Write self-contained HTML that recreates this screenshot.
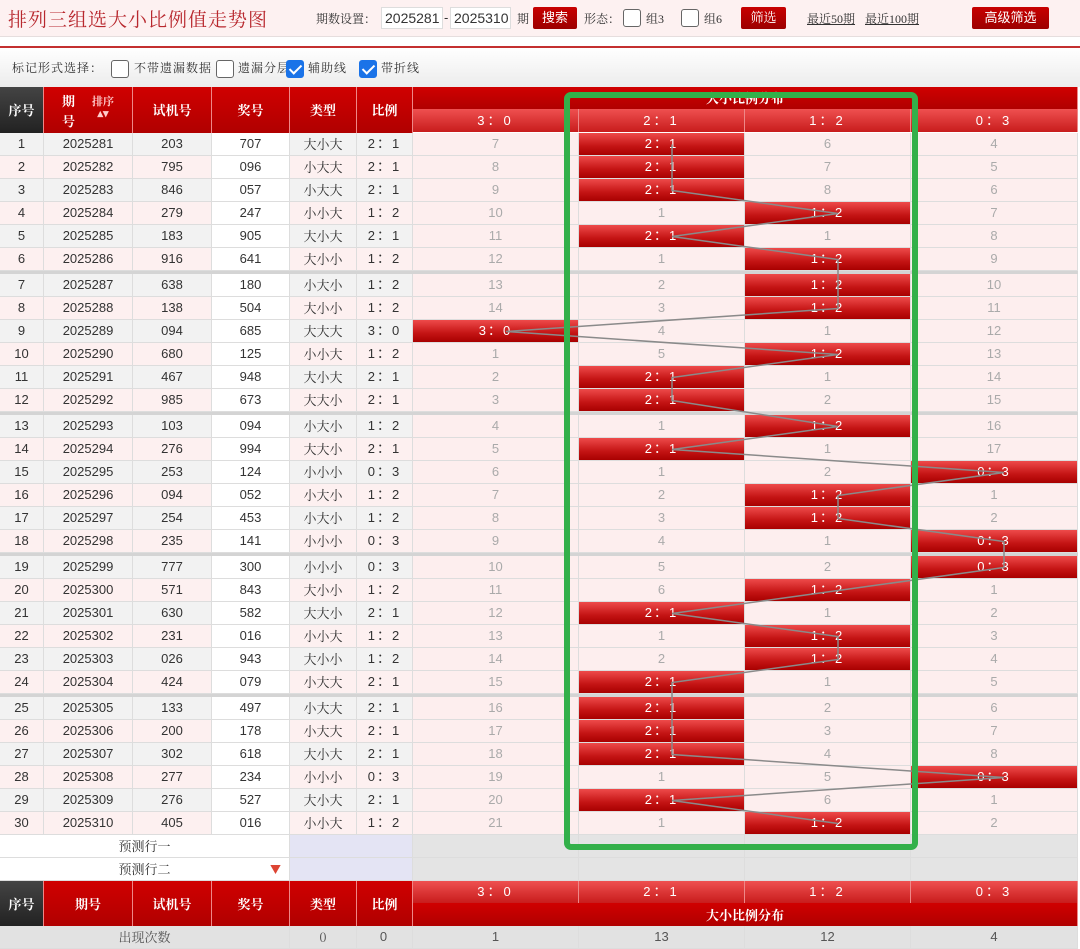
<!DOCTYPE html>
<html><head><meta charset="utf-8">
<style>
*{box-sizing:border-box;margin:0;padding:0}
body{width:1080px;height:939px;overflow:hidden;background:#fff;font-family:"Liberation Sans","Noto Sans CJK SC",sans-serif;font-size:13px;color:#333;position:relative}
.top{position:absolute;left:0;top:0;width:1080px;height:37px;background:#fdf1f1;border-bottom:1px solid #e6dede}
.a{position:absolute;white-space:nowrap}
.sf{font-family:"Liberation Serif","Noto Serif CJK SC",serif}
.title{left:8px;top:5px;font-size:19px;color:#b8282e;font-family:"Noto Serif CJK SC",serif;letter-spacing:1px}
.inp{position:absolute;top:7px;height:22px;background:#fff;border:1px solid #ddd;font-size:14px;line-height:20px;padding-left:3px}
.btn{position:absolute;top:7px;height:22px;background:linear-gradient(#c80000,#9c0000);color:#fff;font-size:13px;line-height:22px;text-align:center;border-radius:2px}
.cb{position:absolute;width:18px;height:18px;border:1px solid #666;border-radius:3px;background:#fff}
.cb.on{background:#1a73e8;border-color:#1a73e8}
.cb.on:after{content:"";position:absolute;left:5px;top:1px;width:5px;height:10px;border:solid #fff;border-width:0 2px 2px 0;transform:rotate(45deg)}
.lnk{text-decoration:underline;color:#333;font-size:12px}
.bar{position:absolute;left:0;top:46px;width:1080px;height:41px;border-top:2px solid #c43030;background:linear-gradient(#fff,#ececec)}
.row{position:absolute;left:0;height:23px;display:flex}
.row div{height:23px;line-height:22px;text-align:center;border-right:1px solid #ddd;border-bottom:1px solid #ddd;flex:none}
.w0{width:44px}.w1{width:89px}.w2{width:79px}.w3{width:78px}.w4{width:67px}.w5{width:56px;letter-spacing:2px}.w6{width:166px}.w9{width:167px}
.o div{background:#f2f2f2}.e div{background:#fdf0f0}
.row div.j{background:#fff}
.row div.w4{font-family:"Noto Serif CJK SC",serif}
.row div.m{background:#fdeeee;color:#aaa}
.row div.h{background:linear-gradient(#ee4a4a,#c41414 60%,#a80000);color:#fff;letter-spacing:2px}
.sep{position:absolute;left:0;width:1078px;height:3px;background:#d4d4d4}
.hd{position:absolute;color:#fff;font-weight:bold;text-align:center;font-size:13px;border-right:1px solid #e88;font-family:"Noto Serif CJK SC",serif}
.red{background:linear-gradient(#d00000,#b00000)}
.lt{background:linear-gradient(#ef5050,#c81c1c);font-weight:normal;font-family:"Liberation Sans","Noto Sans CJK SC",sans-serif;letter-spacing:3px}
</style></head><body>
<div class="top">
<div class="a title">排列三组选大小比例值走势图</div>
<div class="a sf" style="left:316px;top:10px;font-size:12px">期数设置：</div>
<div class="inp" style="left:381px;width:62px">2025281</div>
<div class="a" style="left:444px;top:10px">-</div>
<div class="inp" style="left:450px;width:61px">2025310</div>
<div class="a sf" style="left:517px;top:10px;font-size:12px">期</div>
<div class="btn" style="left:533px;width:44px">搜索</div>
<div class="a sf" style="left:584px;top:10px;font-size:12px">形态：</div>
<div class="cb" style="left:623px;top:9px"></div><div class="a sf" style="left:646px;top:10px;font-size:12px">组3</div>
<div class="cb" style="left:681px;top:9px"></div><div class="a sf" style="left:704px;top:10px;font-size:12px">组6</div>
<div class="btn sf" style="left:741px;width:45px">筛选</div>
<div class="a lnk sf" style="left:807px;top:10px">最近50期</div>
<div class="a lnk sf" style="left:865px;top:10px">最近100期</div>
<div class="btn" style="left:972px;width:77px">高级筛选</div>
</div>
<div class="bar">
<div class="a sf" style="left:12px;top:11px;font-size:12px;letter-spacing:1px">标记形式选择：</div>
<div class="cb" style="left:111px;top:12px"></div><div class="a sf" style="left:134px;top:11px;font-size:12px;letter-spacing:1px">不带遗漏数据</div>
<div class="cb" style="left:216px;top:12px"></div><div class="a sf" style="left:238px;top:11px;font-size:12px;letter-spacing:1px">遗漏分层</div>
<div class="cb on" style="left:286px;top:12px"></div><div class="a sf" style="left:308px;top:11px;font-size:12px;letter-spacing:1px">辅助线</div>
<div class="cb on" style="left:359px;top:12px"></div><div class="a sf" style="left:381px;top:11px;font-size:12px;letter-spacing:1px">带折线</div>
</div>
<!-- header -->
<div class="hd" style="left:0;top:87px;width:44px;height:46px;line-height:46px;background:linear-gradient(#444,#222)">序号</div>
<div class="hd red" style="left:44px;top:87px;width:89px;height:46px"><span class="a" style="left:18px;top:4px">期</span><span class="a" style="left:18px;top:24px">号</span><span class="a" style="left:48px;top:8px;font-size:11px;color:#fcc;line-height:12px">排序<br>▴▾</span></div>
<div class="hd red" style="left:133px;top:87px;width:79px;height:46px;line-height:46px">试机号</div>
<div class="hd red" style="left:212px;top:87px;width:78px;height:46px;line-height:46px">奖号</div>
<div class="hd red" style="left:290px;top:87px;width:67px;height:46px;line-height:46px">类型</div>
<div class="hd red" style="left:357px;top:87px;width:56px;height:46px;line-height:46px">比例</div>
<div class="hd red" style="left:413px;top:87px;width:665px;height:22px;line-height:22px">大小比例分布</div>
<div class="hd lt" style="left:413px;top:109px;width:166px;height:23px;line-height:23px">3：0</div>
<div class="hd lt" style="left:579px;top:109px;width:166px;height:23px;line-height:23px">2：1</div>
<div class="hd lt" style="left:745px;top:109px;width:166px;height:23px;line-height:23px">1：2</div>
<div class="hd lt" style="left:911px;top:109px;width:167px;height:23px;line-height:23px">0：3</div>

<div class="row o" style="top:133px"><div class="w0">1</div><div class="w1">2025281</div><div class="w2">203</div><div class="w3 j">707</div><div class="w4">大小大</div><div class="w5">2：1</div><div class="w6 m">7</div><div class="w6 h">2：1</div><div class="w6 m">6</div><div class="w9 m">4</div></div>
<div class="row e" style="top:156px"><div class="w0">2</div><div class="w1">2025282</div><div class="w2">795</div><div class="w3 j">096</div><div class="w4">小大大</div><div class="w5">2：1</div><div class="w6 m">8</div><div class="w6 h">2：1</div><div class="w6 m">7</div><div class="w9 m">5</div></div>
<div class="row o" style="top:179px"><div class="w0">3</div><div class="w1">2025283</div><div class="w2">846</div><div class="w3 j">057</div><div class="w4">小大大</div><div class="w5">2：1</div><div class="w6 m">9</div><div class="w6 h">2：1</div><div class="w6 m">8</div><div class="w9 m">6</div></div>
<div class="row e" style="top:202px"><div class="w0">4</div><div class="w1">2025284</div><div class="w2">279</div><div class="w3 j">247</div><div class="w4">小小大</div><div class="w5">1：2</div><div class="w6 m">10</div><div class="w6 m">1</div><div class="w6 h">1：2</div><div class="w9 m">7</div></div>
<div class="row o" style="top:225px"><div class="w0">5</div><div class="w1">2025285</div><div class="w2">183</div><div class="w3 j">905</div><div class="w4">大小大</div><div class="w5">2：1</div><div class="w6 m">11</div><div class="w6 h">2：1</div><div class="w6 m">1</div><div class="w9 m">8</div></div>
<div class="row e" style="top:248px"><div class="w0">6</div><div class="w1">2025286</div><div class="w2">916</div><div class="w3 j">641</div><div class="w4">大小小</div><div class="w5">1：2</div><div class="w6 m">12</div><div class="w6 m">1</div><div class="w6 h">1：2</div><div class="w9 m">9</div></div>
<div class="sep" style="top:271px"></div>
<div class="row o" style="top:274px"><div class="w0">7</div><div class="w1">2025287</div><div class="w2">638</div><div class="w3 j">180</div><div class="w4">小大小</div><div class="w5">1：2</div><div class="w6 m">13</div><div class="w6 m">2</div><div class="w6 h">1：2</div><div class="w9 m">10</div></div>
<div class="row e" style="top:297px"><div class="w0">8</div><div class="w1">2025288</div><div class="w2">138</div><div class="w3 j">504</div><div class="w4">大小小</div><div class="w5">1：2</div><div class="w6 m">14</div><div class="w6 m">3</div><div class="w6 h">1：2</div><div class="w9 m">11</div></div>
<div class="row o" style="top:320px"><div class="w0">9</div><div class="w1">2025289</div><div class="w2">094</div><div class="w3 j">685</div><div class="w4">大大大</div><div class="w5">3：0</div><div class="w6 h">3：0</div><div class="w6 m">4</div><div class="w6 m">1</div><div class="w9 m">12</div></div>
<div class="row e" style="top:343px"><div class="w0">10</div><div class="w1">2025290</div><div class="w2">680</div><div class="w3 j">125</div><div class="w4">小小大</div><div class="w5">1：2</div><div class="w6 m">1</div><div class="w6 m">5</div><div class="w6 h">1：2</div><div class="w9 m">13</div></div>
<div class="row o" style="top:366px"><div class="w0">11</div><div class="w1">2025291</div><div class="w2">467</div><div class="w3 j">948</div><div class="w4">大小大</div><div class="w5">2：1</div><div class="w6 m">2</div><div class="w6 h">2：1</div><div class="w6 m">1</div><div class="w9 m">14</div></div>
<div class="row e" style="top:389px"><div class="w0">12</div><div class="w1">2025292</div><div class="w2">985</div><div class="w3 j">673</div><div class="w4">大大小</div><div class="w5">2：1</div><div class="w6 m">3</div><div class="w6 h">2：1</div><div class="w6 m">2</div><div class="w9 m">15</div></div>
<div class="sep" style="top:412px"></div>
<div class="row o" style="top:415px"><div class="w0">13</div><div class="w1">2025293</div><div class="w2">103</div><div class="w3 j">094</div><div class="w4">小大小</div><div class="w5">1：2</div><div class="w6 m">4</div><div class="w6 m">1</div><div class="w6 h">1：2</div><div class="w9 m">16</div></div>
<div class="row e" style="top:438px"><div class="w0">14</div><div class="w1">2025294</div><div class="w2">276</div><div class="w3 j">994</div><div class="w4">大大小</div><div class="w5">2：1</div><div class="w6 m">5</div><div class="w6 h">2：1</div><div class="w6 m">1</div><div class="w9 m">17</div></div>
<div class="row o" style="top:461px"><div class="w0">15</div><div class="w1">2025295</div><div class="w2">253</div><div class="w3 j">124</div><div class="w4">小小小</div><div class="w5">0：3</div><div class="w6 m">6</div><div class="w6 m">1</div><div class="w6 m">2</div><div class="w9 h">0：3</div></div>
<div class="row e" style="top:484px"><div class="w0">16</div><div class="w1">2025296</div><div class="w2">094</div><div class="w3 j">052</div><div class="w4">小大小</div><div class="w5">1：2</div><div class="w6 m">7</div><div class="w6 m">2</div><div class="w6 h">1：2</div><div class="w9 m">1</div></div>
<div class="row o" style="top:507px"><div class="w0">17</div><div class="w1">2025297</div><div class="w2">254</div><div class="w3 j">453</div><div class="w4">小大小</div><div class="w5">1：2</div><div class="w6 m">8</div><div class="w6 m">3</div><div class="w6 h">1：2</div><div class="w9 m">2</div></div>
<div class="row e" style="top:530px"><div class="w0">18</div><div class="w1">2025298</div><div class="w2">235</div><div class="w3 j">141</div><div class="w4">小小小</div><div class="w5">0：3</div><div class="w6 m">9</div><div class="w6 m">4</div><div class="w6 m">1</div><div class="w9 h">0：3</div></div>
<div class="sep" style="top:553px"></div>
<div class="row o" style="top:556px"><div class="w0">19</div><div class="w1">2025299</div><div class="w2">777</div><div class="w3 j">300</div><div class="w4">小小小</div><div class="w5">0：3</div><div class="w6 m">10</div><div class="w6 m">5</div><div class="w6 m">2</div><div class="w9 h">0：3</div></div>
<div class="row e" style="top:579px"><div class="w0">20</div><div class="w1">2025300</div><div class="w2">571</div><div class="w3 j">843</div><div class="w4">大小小</div><div class="w5">1：2</div><div class="w6 m">11</div><div class="w6 m">6</div><div class="w6 h">1：2</div><div class="w9 m">1</div></div>
<div class="row o" style="top:602px"><div class="w0">21</div><div class="w1">2025301</div><div class="w2">630</div><div class="w3 j">582</div><div class="w4">大大小</div><div class="w5">2：1</div><div class="w6 m">12</div><div class="w6 h">2：1</div><div class="w6 m">1</div><div class="w9 m">2</div></div>
<div class="row e" style="top:625px"><div class="w0">22</div><div class="w1">2025302</div><div class="w2">231</div><div class="w3 j">016</div><div class="w4">小小大</div><div class="w5">1：2</div><div class="w6 m">13</div><div class="w6 m">1</div><div class="w6 h">1：2</div><div class="w9 m">3</div></div>
<div class="row o" style="top:648px"><div class="w0">23</div><div class="w1">2025303</div><div class="w2">026</div><div class="w3 j">943</div><div class="w4">大小小</div><div class="w5">1：2</div><div class="w6 m">14</div><div class="w6 m">2</div><div class="w6 h">1：2</div><div class="w9 m">4</div></div>
<div class="row e" style="top:671px"><div class="w0">24</div><div class="w1">2025304</div><div class="w2">424</div><div class="w3 j">079</div><div class="w4">小大大</div><div class="w5">2：1</div><div class="w6 m">15</div><div class="w6 h">2：1</div><div class="w6 m">1</div><div class="w9 m">5</div></div>
<div class="sep" style="top:694px"></div>
<div class="row o" style="top:697px"><div class="w0">25</div><div class="w1">2025305</div><div class="w2">133</div><div class="w3 j">497</div><div class="w4">小大大</div><div class="w5">2：1</div><div class="w6 m">16</div><div class="w6 h">2：1</div><div class="w6 m">2</div><div class="w9 m">6</div></div>
<div class="row e" style="top:720px"><div class="w0">26</div><div class="w1">2025306</div><div class="w2">200</div><div class="w3 j">178</div><div class="w4">小大大</div><div class="w5">2：1</div><div class="w6 m">17</div><div class="w6 h">2：1</div><div class="w6 m">3</div><div class="w9 m">7</div></div>
<div class="row o" style="top:743px"><div class="w0">27</div><div class="w1">2025307</div><div class="w2">302</div><div class="w3 j">618</div><div class="w4">大小大</div><div class="w5">2：1</div><div class="w6 m">18</div><div class="w6 h">2：1</div><div class="w6 m">4</div><div class="w9 m">8</div></div>
<div class="row e" style="top:766px"><div class="w0">28</div><div class="w1">2025308</div><div class="w2">277</div><div class="w3 j">234</div><div class="w4">小小小</div><div class="w5">0：3</div><div class="w6 m">19</div><div class="w6 m">1</div><div class="w6 m">5</div><div class="w9 h">0：3</div></div>
<div class="row o" style="top:789px"><div class="w0">29</div><div class="w1">2025309</div><div class="w2">276</div><div class="w3 j">527</div><div class="w4">大小大</div><div class="w5">2：1</div><div class="w6 m">20</div><div class="w6 h">2：1</div><div class="w6 m">6</div><div class="w9 m">1</div></div>
<div class="row e" style="top:812px"><div class="w0">30</div><div class="w1">2025310</div><div class="w2">405</div><div class="w3 j">016</div><div class="w4">小小大</div><div class="w5">1：2</div><div class="w6 m">21</div><div class="w6 m">1</div><div class="w6 h">1：2</div><div class="w9 m">2</div></div>

<!-- prediction rows -->
<div class="row sf" style="top:835px"><div style="width:290px;background:#fff;font-family:'Noto Serif CJK SC',serif">预测行一</div><div style="width:123px;background:#e4e4f4"></div><div class="w6" style="background:#e4e4e4"></div><div class="w6" style="background:#e4e4e4"></div><div class="w6" style="background:#e4e4e4"></div><div class="w9" style="background:#e4e4e4"></div></div>
<div class="row" style="top:858px"><div style="width:290px;background:#fff;position:relative;font-family:'Noto Serif CJK SC',serif">预测行二<span style="position:absolute;left:270px;top:0;color:#d43;font-size:11px">▼</span></div><div style="width:123px;background:#e4e4f4"></div><div class="w6" style="background:#e4e4e4"></div><div class="w6" style="background:#e4e4e4"></div><div class="w6" style="background:#e4e4e4"></div><div class="w9" style="background:#e4e4e4"></div></div>

<!-- bottom header -->
<div class="hd" style="left:0;top:881px;width:44px;height:45px;line-height:45px;background:linear-gradient(#444,#222)">序号</div>
<div class="hd red" style="left:44px;top:881px;width:89px;height:45px;line-height:45px">期号</div>
<div class="hd red" style="left:133px;top:881px;width:79px;height:45px;line-height:45px">试机号</div>
<div class="hd red" style="left:212px;top:881px;width:78px;height:45px;line-height:45px">奖号</div>
<div class="hd red" style="left:290px;top:881px;width:67px;height:45px;line-height:45px">类型</div>
<div class="hd red" style="left:357px;top:881px;width:56px;height:45px;line-height:45px">比例</div>
<div class="hd lt" style="left:413px;top:881px;width:166px;height:22px;line-height:22px">3：0</div>
<div class="hd lt" style="left:579px;top:881px;width:166px;height:22px;line-height:22px">2：1</div>
<div class="hd lt" style="left:745px;top:881px;width:166px;height:22px;line-height:22px">1：2</div>
<div class="hd lt" style="left:911px;top:881px;width:167px;height:22px;line-height:22px">0：3</div>
<div class="hd red" style="left:413px;top:903px;width:665px;height:23px;line-height:23px">大小比例分布</div>
<div class="row" style="top:926px;color:#555"><div style="width:290px;background:#e2e2e2;font-family:'Noto Serif CJK SC',serif">出现次数</div><div class="w4" style="background:#e2e2e2">0</div><div class="w5" style="background:#e2e2e2">0</div><div class="w6" style="background:#e2e2e2">1</div><div class="w6" style="background:#e2e2e2">13</div><div class="w6" style="background:#e2e2e2">12</div><div class="w9" style="background:#e2e2e2">4</div></div>

<svg class="a" style="left:0;top:0" width="1080" height="939">
<polyline fill="none" stroke="#8a8a8a" stroke-width="1.5" points="672,144.5 672,167.5 672,190.5 838,213.5 672,236.5 838,259.5 838,285.5 838,308.5 506,331.5 838,354.5 672,377.5 672,400.5 838,426.5 672,449.5 1004,472.5 838,495.5 838,518.5 1004,541.5 1004,567.5 838,590.5 672,613.5 838,636.5 838,659.5 672,682.5 672,708.5 672,731.5 672,754.5 1004,777.5 672,800.5 838,823.5"/>
<rect x="567" y="95" width="348" height="752" rx="4" fill="none" stroke="#33b04a" stroke-width="6"/>
</svg>
</body></html>
